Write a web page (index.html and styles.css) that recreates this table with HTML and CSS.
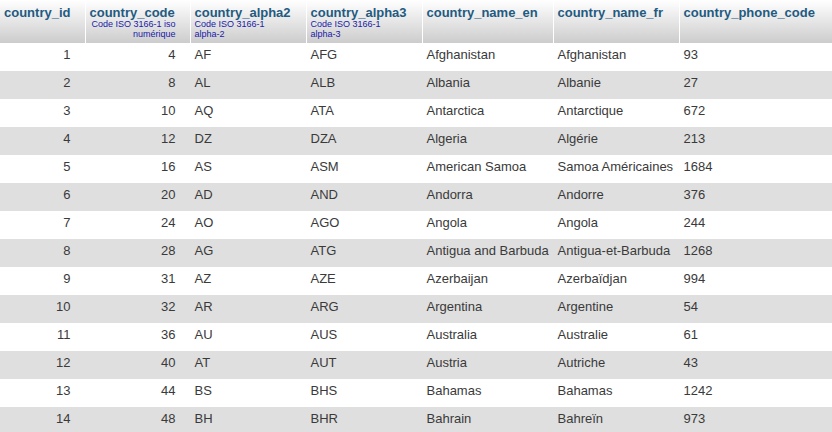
FILE: index.html
```html
<!DOCTYPE html>
<html>
<head>
<meta charset="utf-8">
<link rel="stylesheet" href="styles.css">
</head>
<body>
<table class="grid">
  <colgroup>
    <col class="c1"><col class="c2"><col class="c3"><col class="c4"><col class="c5"><col class="c6"><col class="c7">
  </colgroup>
  <thead>
    <tr>
      <th><div class="title">country_id</div></th>
      <th><div class="title">country_code</div><div class="sub right">Code ISO 3166-1 iso<br>numérique</div></th>
      <th><div class="title">country_alpha2</div><div class="sub">Code ISO 3166-1<br>alpha-2</div></th>
      <th><div class="title">country_alpha3</div><div class="sub">Code ISO 3166-1<br>alpha-3</div></th>
      <th><div class="title">country_name_en</div></th>
      <th><div class="title">country_name_fr</div></th>
      <th><div class="title">country_phone_code</div></th>
    </tr>
  </thead>
  <tbody>
    <tr><td class="num">1</td><td class="num">4</td><td>AF</td><td>AFG</td><td>Afghanistan</td><td>Afghanistan</td><td>93</td></tr>
    <tr><td class="num">2</td><td class="num">8</td><td>AL</td><td>ALB</td><td>Albania</td><td>Albanie</td><td>27</td></tr>
    <tr><td class="num">3</td><td class="num">10</td><td>AQ</td><td>ATA</td><td>Antarctica</td><td>Antarctique</td><td>672</td></tr>
    <tr><td class="num">4</td><td class="num">12</td><td>DZ</td><td>DZA</td><td>Algeria</td><td>Algérie</td><td>213</td></tr>
    <tr><td class="num">5</td><td class="num">16</td><td>AS</td><td>ASM</td><td>American Samoa</td><td>Samoa Américaines</td><td>1684</td></tr>
    <tr><td class="num">6</td><td class="num">20</td><td>AD</td><td>AND</td><td>Andorra</td><td>Andorre</td><td>376</td></tr>
    <tr><td class="num">7</td><td class="num">24</td><td>AO</td><td>AGO</td><td>Angola</td><td>Angola</td><td>244</td></tr>
    <tr><td class="num">8</td><td class="num">28</td><td>AG</td><td>ATG</td><td>Antigua and Barbuda</td><td>Antigua-et-Barbuda</td><td>1268</td></tr>
    <tr><td class="num">9</td><td class="num">31</td><td>AZ</td><td>AZE</td><td>Azerbaijan</td><td>Azerbaïdjan</td><td>994</td></tr>
    <tr><td class="num">10</td><td class="num">32</td><td>AR</td><td>ARG</td><td>Argentina</td><td>Argentine</td><td>54</td></tr>
    <tr><td class="num">11</td><td class="num">36</td><td>AU</td><td>AUS</td><td>Australia</td><td>Australie</td><td>61</td></tr>
    <tr><td class="num">12</td><td class="num">40</td><td>AT</td><td>AUT</td><td>Austria</td><td>Autriche</td><td>43</td></tr>
    <tr><td class="num">13</td><td class="num">44</td><td>BS</td><td>BHS</td><td>Bahamas</td><td>Bahamas</td><td>1242</td></tr>
    <tr><td class="num">14</td><td class="num">48</td><td>BH</td><td>BHR</td><td>Bahrain</td><td>Bahreïn</td><td>973</td></tr>
  </tbody>
</table>
</body>
</html>
```
FILE: styles.css
```css
html, body {
  margin: 0;
  padding: 0;
  background: #fff;
}
body {
  font-family: "Liberation Sans", Arial, sans-serif;
  font-size: 13px;
  color: #3a3a3a;
}
.grid {
  width: 832px;
  table-layout: fixed;
  border-collapse: collapse;
  border-spacing: 0;
}
.c1 { width: 85px; }
.c2 { width: 105px; }
.c3 { width: 116px; }
.c4 { width: 116px; }
.c5 { width: 131px; }
.c6 { width: 126px; }
.c7 { width: 153px; }

.grid th {
  height: 43px;
  box-sizing: border-box;
  padding: 5px 14px 0 4px;
  vertical-align: top;
  text-align: left;
  background: linear-gradient(#ffffff, #cccccc);
  border-left: 1px solid #ffffff;
  white-space: nowrap;
}
.grid th:first-child {
  border-left: none;
}
.title {
  font-weight: bold;
  font-size: 13px;
  line-height: 15px;
  color: #235a81;
}
.sub {
  font-weight: normal;
  font-size: 9px;
  line-height: 9.5px;
  color: #2020a8;
}
.sub.right {
  text-align: right;
}
.grid td {
  height: 28px;
  box-sizing: border-box;
  padding: 4px 14px 0 4px;
  vertical-align: top;
  line-height: 15px;
  white-space: nowrap;
  overflow: visible;
  border-left: 1px solid transparent;
}
.grid td:first-child {
  border-left: none;
}
.grid td.num {
  text-align: right;
}
.grid tbody tr:nth-child(even) td {
  background: #dfdfdf;
}
```
